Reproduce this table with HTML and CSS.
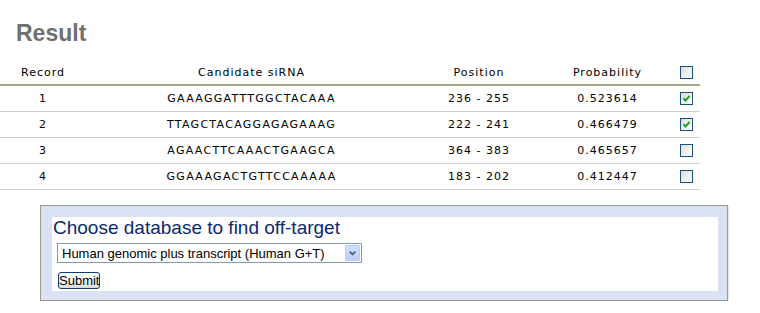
FILE: index.html
```html
<!DOCTYPE html>
<html>
<head>
<meta charset="utf-8">
<link rel="stylesheet" href="styles.css">
</head>
<body>
<h2 class="title">Result</h2>
<table class="results">
  <colgroup>
    <col class="c-rec"><col class="c-seq"><col class="c-pos"><col class="c-prob"><col class="c-chk">
  </colgroup>
  <thead>
    <tr>
      <th>Record</th><th>Candidate siRNA</th><th>Position</th><th>Probability</th>
      <th><span class="cb"></span></th>
    </tr>
  </thead>
  <tbody>
    <tr><td>1</td><td class="seq">GAAAGGATTTGGCTACAAA</td><td>236 - 255</td><td>0.523614</td>
      <td><span class="cb"><svg viewBox="0 0 11 11" width="11" height="11"><path d="M2.5 5.2 L4.6 7.4 L8.6 2.8" fill="none" stroke="#21a121" stroke-width="2"/></svg></span></td></tr>
    <tr><td>2</td><td class="seq">TTAGCTACAGGAGAGAAAG</td><td>222 - 241</td><td>0.466479</td>
      <td><span class="cb"><svg viewBox="0 0 11 11" width="11" height="11"><path d="M2.5 5.2 L4.6 7.4 L8.6 2.8" fill="none" stroke="#21a121" stroke-width="2"/></svg></span></td></tr>
    <tr><td>3</td><td class="seq">AGAACTTCAAACTGAAGCA</td><td>364 - 383</td><td>0.465657</td>
      <td><span class="cb"></span></td></tr>
    <tr><td>4</td><td class="seq">GGAAAGACTGTTCCAAAAA</td><td>183 - 202</td><td>0.412447</td>
      <td><span class="cb"></span></td></tr>
  </tbody>
</table>

<div class="dbbox">
  <div class="dbinner">
    <div class="dbtitle">Choose database to find off-target</div>
    <div class="selectwrap">
      <select class="dbselect">
        <option>Human genomic plus transcript (Human G+T)</option>
      </select>
      <span class="selarrow"><svg viewBox="0 0 14 14" width="14" height="14"><path d="M4 5.5 L7 8.5 L10 5.5" fill="none" stroke="#4d6185" stroke-width="2"/></svg></span>
    </div>
    <button class="submit" type="button">Submit</button>
  </div>
</div>
</body>
</html>
```

FILE: styles.css
```css
html, body {
  margin: 0;
  padding: 0;
  background: #fff;
}
body {
  font-family: "DejaVu Sans", Verdana, sans-serif;
  color: #000;
}
.title {
  margin: 0;
  padding: 19px 0 0 16px;
  font-family: "Liberation Sans", Arial, sans-serif;
  font-weight: bold;
  font-size: 23px;
  line-height: 28px;
  color: #707070;
}
.results {
  margin-top: 13px;
  width: 700px;
  border-collapse: collapse;
  table-layout: fixed;
  font-size: 11px;
  letter-spacing: 1px;
}
.c-rec { width: 86px; }
.c-seq { width: 331px; }
.c-pos { width: 124px; }
.c-prob { width: 133px; }
.c-chk { width: 26px; }
.results th {
  font-weight: normal;
  height: 24px;
  padding: 0;
  text-align: center;
  vertical-align: middle;
  border-bottom: 2px solid #a1a88b;
}
.results td {
  height: 25px;
  padding: 0;
  text-align: center;
  vertical-align: middle;
  border-bottom: 1px solid #cfcfcf;
}
.results td.seq {
  letter-spacing: 1.3px;
}
.results th:last-child,
.results td:last-child {
  letter-spacing: 0;
  text-align: left;
}
.cb {
  display: inline-flex;
  align-items: center;
  justify-content: center;
  box-sizing: border-box;
  width: 13px;
  height: 13px;
  border: 1px solid #1c5180;
  background: linear-gradient(135deg, #dcdcd6 0%, #f6f6f4 70%, #fff 100%);
  vertical-align: middle;
  margin-left: 6px;
}
.cb svg { display: block; }

.dbbox {
  margin: 15px 0 0 40px;
  width: 688px;
  box-sizing: border-box;
  border: 1px solid #9b998a;
  box-shadow: 1px 1px 0 #ece9d8;
  background: #dae3f3;
  padding: 11px 9px 9px 11px;
}
.dbinner {
  background: #fff;
  padding: 0 0 2px 0;
}
.dbtitle {
  font-family: "Liberation Sans", Arial, sans-serif;
  font-size: 19px;
  line-height: 22px;
  color: #0b2a6c;
  padding-left: 1px;
}
.selectwrap {
  display: flex;
  align-items: center;
  width: 305px;
  height: 20px;
  box-sizing: border-box;
  margin: 4px 0 0 5px;
  border: 1px solid #7f9db9;
  background: #fff;
}
.dbselect {
  appearance: none;
  -webkit-appearance: none;
  border: none;
  outline: none;
  background: transparent;
  flex: 1;
  min-width: 0;
  height: 18px;
  padding: 0 0 0 4px;
  margin: 0;
  font-family: "Liberation Sans", Arial, sans-serif;
  font-size: 13px;
  color: #000;
}
.selarrow {
  display: flex;
  align-items: center;
  justify-content: center;
  width: 15px;
  height: 16px;
  margin-right: 1px;
  box-sizing: border-box;
  border: 1px solid #b9cbf5;
  border-radius: 1px;
  background: linear-gradient(180deg, #d3e0fd 0%, #bccff9 100%);
}
.selarrow svg { display: block; }
.submit {
  display: block;
  margin: 9px 0 0 6px;
  height: 17px;
  padding: 0;
  border: 1px solid #0f3c74;
  border-radius: 3px;
  background: linear-gradient(180deg, #ffffff 0%, #f3f3ef 60%, #dcdcd4 100%);
  font-family: "Liberation Sans", Arial, sans-serif;
  font-size: 13px;
  line-height: 15px;
  color: #000;
}
```
